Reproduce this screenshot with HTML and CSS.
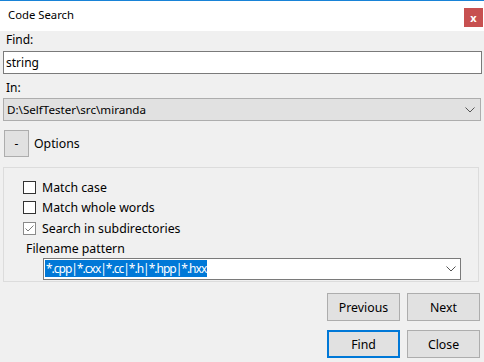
FILE: index.html
```html
<!DOCTYPE html>
<html lang="en">
<head>
  <meta charset="UTF-8">
  <title>Code Search</title>
  <link rel="stylesheet" href="styles.css">
</head>
<body>
  <div class="window">
    <div class="titlebar">
      <span class="title">Code Search</span>
      <span class="close-btn">x</span>
    </div>
    <div class="content">
      <label class="field-label">Find:</label>
      <div class="text-input">string</div>

      <label class="field-label in-label">In:</label>
      <div class="select-box">
        <span>D:\SelfTester\src\miranda</span>
        <svg class="chevron" width="10" height="6" viewBox="0 0 10 6"><path d="M0.5 0.5 L5 5 L9.5 0.5" fill="none" stroke="#555" stroke-width="1"/></svg>
      </div>

      <div class="options-row">
        <div class="toggle-btn">-</div>
        <span class="options-text">Options</span>
      </div>

      <div class="group-box">
        <div class="check-row">
          <span class="checkbox"></span>
          <span>Match case</span>
        </div>
        <div class="check-row">
          <span class="checkbox"></span>
          <span>Match whole words</span>
        </div>
        <div class="check-row">
          <span class="checkbox checked">
            <svg width="11" height="11" viewBox="0 0 11 11"><path d="M1.5 5.5 L4 8 L9.5 2.5" fill="none" stroke="#7a7a7a" stroke-width="1"/></svg>
          </span>
          <span>Search in subdirectories</span>
        </div>
        <div class="pattern-label">Filename pattern</div>
        <div class="combo-box">
          <span class="selected-text">*.cpp|*.cxx|*.cc|*.h|*.hpp|*.hxx</span>
          <svg class="chevron" width="10" height="6" viewBox="0 0 10 6"><path d="M0.5 0.5 L5 5 L9.5 0.5" fill="none" stroke="#555" stroke-width="1"/></svg>
        </div>
      </div>

      <div class="button-grid">
        <div class="btn">Previous</div>
        <div class="btn">Next</div>
        <div class="btn default">Find</div>
        <div class="btn">Close</div>
      </div>
    </div>
  </div>
</body>
</html>
```

FILE: styles.css
```css
body {
  margin: 0;
  padding: 0;
  font-family: 'Noto Sans', sans-serif;
  font-size: 12px;
  color: #000;
  background-color: #f0f0f0;
}

.window {
  width: 484px;
  height: 362px;
  background-color: #f0f0f0;
  overflow: hidden;
}

.titlebar {
  height: 30px;
  border-top: 1px solid #1883d7;
  background-color: #fff;
  display: flex;
  align-items: center;
  justify-content: space-between;
  padding: 0 1px 0 8px;
}

.title {
  font-size: 11.3px;
  margin-top: -3px;
}

.close-btn {
  width: 19px;
  height: 19px;
  margin-top: 3px;
  background-color: #c75050;
  color: #fff;
  font-weight: bold;
  font-size: 11px;
  display: flex;
  align-items: center;
  justify-content: center;
  line-height: 1;
}

.content {
  padding: 1px 3px 0 3px;
  display: flex;
  flex-direction: column;
}

.field-label {
  display: block;
  height: 16px;
  line-height: 16px;
  padding-left: 3px;
}

.text-input {
  margin-top: 3px;
  height: 21px;
  line-height: 21px;
  border: 1px solid #7a7a7a;
  background-color: #fff;
  padding-left: 2px;
  width: 475px;
}

.in-label {
  margin-top: 6px;
}

.select-box {
  margin-top: 2px;
  height: 21px;
  border: 1px solid #adadad;
  background-color: #e1e1e1;
  display: flex;
  align-items: center;
  justify-content: space-between;
  padding: 0 5px 0 3px;
  width: 468px;
  font-size: 11.6px;
}

.options-row {
  margin-top: 9px;
  display: flex;
  align-items: center;
  padding-left: 1px;
}

.toggle-btn {
  width: 23px;
  height: 25px;
  border: 1px solid #adadad;
  background-color: #e1e1e1;
  display: flex;
  align-items: center;
  justify-content: center;
}

.options-text {
  margin-left: 5px;
  font-size: 12.3px;
}

.group-box {
  margin-top: 10px;
  width: 476px;
  height: 115px;
  border: 1px solid #dcdcdc;
  box-sizing: border-box;
  padding: 9px 0 0 19px;
}

.check-row {
  display: flex;
  align-items: center;
  height: 20.5px;
  font-size: 12.3px;
}

.checkbox {
  width: 11px;
  height: 11px;
  border: 1px solid #333;
  background-color: #fff;
  margin-right: 6px;
  display: flex;
}

.checkbox.checked {
  border-color: #8a8a8a;
}

.pattern-label {
  margin-top: 2px;
  padding-left: 3px;
  height: 16px;
  line-height: 16px;
  font-size: 12.3px;
}

.combo-box {
  margin: 1px 0 0 20px;
  height: 20px;
  border: 1px solid #7a7a7a;
  background-color: #fff;
  display: flex;
  align-items: center;
  justify-content: space-between;
  padding: 0 4px 0 1px;
  width: 411px;
}

.selected-text {
  background-color: #0078d7;
  color: #fff;
  line-height: 17px;
  padding: 0 1px;
  letter-spacing: -1px;
}

.button-grid {
  margin-top: 11px;
  align-self: flex-end;
  display: grid;
  grid-template-columns: 73px 73px;
  column-gap: 7px;
  row-gap: 9px;
  margin-right: 1px;
}

.btn {
  height: 26px;
  border: 1px solid #adadad;
  background-color: #e1e1e1;
  display: flex;
  align-items: center;
  justify-content: center;
  font-size: 12.3px;
}

.btn.default {
  border: 2px solid #0078d7;
  height: 24px;
}
```
